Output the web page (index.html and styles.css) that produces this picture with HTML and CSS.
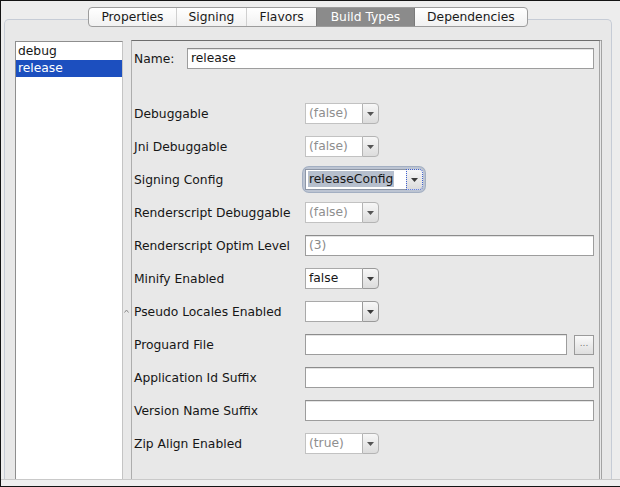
FILE: index.html
```html
<!DOCTYPE html>
<html>
<head>
<meta charset="utf-8">
<title>Build Types</title>
<link rel="stylesheet" href="styles.css">
</head>
<body>
<div class="window">
  <div class="main">
    <div class="tabrow">
      <div class="tabbar">
        <div class="tab">Properties</div>
        <div class="tab">Signing</div>
        <div class="tab">Flavors</div>
        <div class="tab active">Build Types</div>
        <div class="tab">Dependencies</div>
      </div>
    </div>
    <div class="panel">
      <ul class="list">
        <li>debug</li>
        <li class="sel">release</li>
      </ul>
      <div class="divider">
        <svg class="caret" width="5" height="4" viewBox="0 0 5 4"><path d="M0.5 3.5 L2.5 1 L4.5 3.5" fill="none" stroke="#8a8a8a" stroke-width="1"/></svg>
      </div>
      <div class="form">
        <div class="name-row">
          <span class="name-label">Name:</span>
          <div class="field grow">release</div>
        </div>
        <div class="grid">
          <span class="label">Debuggable</span>
          <div class="combo disabled"><span class="value">(false)</span><span class="arrow"><svg width="7" height="4" viewBox="0 0 7 4"><path d="M0 0H7L3.5 4Z"/></svg></span></div>

          <span class="label">Jni Debuggable</span>
          <div class="combo disabled"><span class="value">(false)</span><span class="arrow"><svg width="7" height="4" viewBox="0 0 7 4"><path d="M0 0H7L3.5 4Z"/></svg></span></div>

          <span class="label">Signing Config</span>
          <div class="combo focused"><span class="value"><span class="hl">releaseConfig</span></span><span class="arrow"><svg width="7" height="4" viewBox="0 0 7 4"><path d="M0 0H7L3.5 4Z"/></svg></span></div>

          <span class="label">Renderscript Debuggable</span>
          <div class="combo disabled"><span class="value">(false)</span><span class="arrow"><svg width="7" height="4" viewBox="0 0 7 4"><path d="M0 0H7L3.5 4Z"/></svg></span></div>

          <span class="label">Renderscript Optim Level</span>
          <div class="field muted">(3)</div>

          <span class="label">Minify Enabled</span>
          <div class="combo"><span class="value">false</span><span class="arrow"><svg width="7" height="4" viewBox="0 0 7 4"><path d="M0 0H7L3.5 4Z"/></svg></span></div>

          <span class="label">Pseudo Locales Enabled</span>
          <div class="combo"><span class="value"></span><span class="arrow"><svg width="7" height="4" viewBox="0 0 7 4"><path d="M0 0H7L3.5 4Z"/></svg></span></div>

          <span class="label">Proguard File</span>
          <div class="file-row"><div class="field grow"></div><div class="browse">...</div></div>

          <span class="label">Application Id Suffix</span>
          <div class="field"></div>

          <span class="label">Version Name Suffix</span>
          <div class="field"></div>

          <span class="label">Zip Align Enabled</span>
          <div class="combo disabled"><span class="value">(true)</span><span class="arrow"><svg width="7" height="4" viewBox="0 0 7 4"><path d="M0 0H7L3.5 4Z"/></svg></span></div>
        </div>
      </div>
    </div>
  </div>
  <div class="strip"></div>
</div>
</body>
</html>
```

FILE: styles.css
```css
* { box-sizing: border-box; }
html, body { margin: 0; padding: 0; }
body {
  width: 620px;
  height: 487px;
  overflow: hidden;
  font-family: "DejaVu Sans", "Liberation Sans", sans-serif;
  font-size: 12.3px;
  color: #161616;
  background: #ededed;
}
.window {
  height: 487px;
  border: 1px solid #141414;
  border-right: none;
  background: #ededed;
  display: flex;
  flex-direction: column;
}
.main {
  height: 479px;
  border-bottom: 1px solid #c9c9c9;
  padding-top: 6px;
  display: flex;
  flex-direction: column;
}
.strip { flex: 1; background: #efefef; }

.tabrow {
  display: flex;
  justify-content: center;
  margin: 0 8px -8px 3px;
  height: 20px;
  position: relative;
  z-index: 1;
}
.tabbar {
  display: flex;
  border: 1px solid #9c9c9c;
  border-radius: 4px;
  background: linear-gradient(#ffffff, #f1f1f1);
  overflow: hidden;
}
.tab {
  padding: 0 12px;
  line-height: 18px;
  border-left: 1px solid #d0d0d0;
  color: #1a1a1a;
}
.tab:first-child { border-left: none; }
.tab.active {
  background: #8b8b8b;
  color: #ffffff;
  border-left-color: #7a7a7a;
  padding: 0 14px;
}
.tab.active + .tab { border-left-color: #7a7a7a; }

.panel {
  flex: 1;
  margin-left: 3px;
  width: 608px;
  border: 1px solid #c6ccd6;
  border-bottom: none;
  border-radius: 5px 5px 0 0;
  background: #e8e8e8;
  padding: 20px 9px 0 10px;
  display: flex;
}
.list {
  list-style: none;
  margin: 1px 0 0 0;
  padding: 1px 0 0 0;
  width: 108px;
  background: #ffffff;
  border: 1px solid #8e8e8e;
  border-right-color: #c4c4c4;
  border-bottom: none;
}
.list li {
  line-height: 17px;
  height: 17px;
  padding-left: 2px;
}
.list li.sel {
  background: #1c4fbf;
  color: #ffffff;
}
.divider {
  width: 8px;
  position: relative;
}
.caret {
  position: absolute;
  left: 1px;
  top: 269px;
}
.form {
  width: 471px;
  border-top: 1px solid #6d6d6d;
  border-left: 1px solid #adadad;
  border-right: 3px double #a3a3a3;
  padding: 7px 5px 0 2px;
  background: #e8e8e8;
}
.name-row {
  display: flex;
  align-items: center;
  height: 21px;
}
.name-label { width: 53px; }
.grow { flex: 1; }

.grid {
  margin-top: 34px;
  display: grid;
  grid-template-columns: 171px 289px;
  grid-auto-rows: 21px;
  row-gap: 12px;
  align-items: center;
}
.label { white-space: nowrap; }

.field {
  height: 21px;
  border: 1px solid #9d9d9d;
  border-top-color: #8c8c8c;
  background: #ffffff;
  box-shadow: inset 0 1px 0 #e4e4e4;
  padding: 0 3px;
  line-height: 19px;
}
.field.muted { color: #8a8a8a; }

.file-row {
  display: flex;
  align-items: center;
  gap: 7px;
  height: 21px;
}
.browse {
  width: 20px;
  height: 20px;
  border: 1px solid #9a9a9a;
  background: linear-gradient(#fafafa, #dedede);
  color: #777;
  font-size: 9px;
  line-height: 14px;
  text-align: center;
}

.combo {
  display: flex;
  width: 74px;
  height: 21px;
}
.combo .value {
  width: 57px;
  border: 1px solid #a9a9a9;
  border-right: none;
  background: #ffffff;
  padding-left: 3px;
  line-height: 19px;
  white-space: nowrap;
  overflow: hidden;
}
.combo .arrow {
  width: 17px;
  border: 1px solid #9a9a9a;
  border-radius: 0 4px 4px 0;
  background: linear-gradient(#f7f7f7, #dcdcdc);
  display: flex;
  align-items: center;
  justify-content: center;
}
.combo .arrow svg { fill: #3a3a3a; }
.combo.disabled .value {
  color: #8e8e8e;
  border-color: #c2c2c2;
}
.combo.disabled .arrow {
  border-color: #b4b4b4;
}
.combo.disabled .arrow svg { fill: #555; }

.combo.focused {
  width: 118px;
  border-radius: 4px;
  box-shadow: 0 0 0 2px #bcc4d2, 0 0 0 3px #a3afc2;
}
.combo.focused .value {
  width: 101px;
  padding-left: 2px;
  border-color: #8d96a6;
}
.combo.focused .arrow {
  border: 1px dotted #3d5fcf;
}
.hl {
  background: #b6bfcd;
  padding: 1px 1px;
}
```
